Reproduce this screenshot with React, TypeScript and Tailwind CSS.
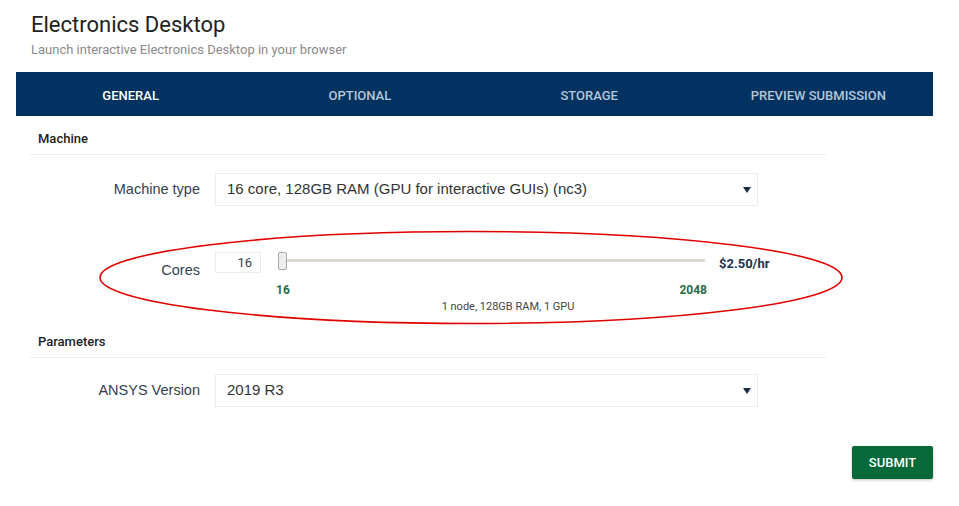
import React from "react";

const tabs = ["GENERAL", "OPTIONAL", "STORAGE", "PREVIEW SUBMISSION"];
const arial = { fontFamily: "'Liberation Sans', Arial, sans-serif" };

function Arrow() {
  return (
    <svg width="8" height="6" viewBox="0 0 8 6" className="text-[#1b2a40]">
      <path d="M0 0h8L4 6z" fill="currentColor" />
    </svg>
  );
}

function SelectBox({ value }: { value: string }) {
  return (
    <div
      className="flex h-[33px] w-[543px] items-center justify-between border border-[#ebebeb] bg-white pl-[11px] pr-[6px] text-[15px] text-[#333]"
      style={arial}
    >
      <span>{value}</span>
      <Arrow />
    </div>
  );
}

function SectionHead({ title }: { title: string }) {
  return (
    <div className="border-b border-[#ececec] pb-[7px] pl-[8px] text-[13px] font-medium leading-[16px] text-[#222]">
      {title}
    </div>
  );
}

function Label({ text, className = "" }: { text: string; className?: string }) {
  return (
    <div className={"w-[170px] text-right text-[14.5px] text-[#2f3f56] " + className} style={arial}>
      {text}
    </div>
  );
}

export default function App() {
  return (
    <div
      className="relative h-[506px] w-[959px] overflow-hidden bg-white"
      style={{ fontFamily: "Roboto, 'Liberation Sans', sans-serif" }}
    >
      {/* header */}
      <div className="pl-[31px] pt-[11px]">
        <h1 className="text-[22px] leading-[28px] text-[#222]">Electronics Desktop</h1>
        <p className="mt-[3px] text-[13px] leading-[16px] text-[#8a8a8a]">
          Launch interactive Electronics Desktop in your browser
        </p>
      </div>

      {/* tabs */}
      <div className="ml-[16px] mt-[14px] grid h-[44px] w-[917px] grid-cols-4 bg-[#02325f]">
        {tabs.map((t, i) => (
          <div
            key={t}
            className={
              "flex items-center justify-center pt-[3px] text-[13px] font-medium " +
              (i === 0 ? "text-white" : "text-[#b7c6d8]")
            }
          >
            {t}
          </div>
        ))}
      </div>

      <div className="ml-[30px] w-[796px]">
        {/* Machine */}
        <div className="pt-[15px]">
          <SectionHead title="Machine" />
        </div>
        <div className="mt-[18px] flex items-center gap-[15px]">
          <Label text="Machine type" />
          <SelectBox value="16 core, 128GB RAM (GPU for interactive GUIs) (nc3)" />
        </div>

        {/* Cores */}
        <div className="mt-[46px] flex gap-[15px]">
          <Label text="Cores" className="pt-[8px]" />
          <div className="w-[586px]">
            <div className="flex items-start">
              <div className="flex h-[21px] w-[46px] items-center justify-end border border-[#ebebeb] pr-[8px] text-[13px] text-[#2f3f56]">
                16
              </div>
              <div className="ml-[17px] w-[427px]">
                <div className="relative h-[18px]">
                  <div className="absolute left-[4px] right-0 top-[7px] h-[3px] bg-[#ddd9d2]" />
                  <div className="absolute left-0 top-0 h-[18px] w-[9px] rounded-[2px] border border-[#a9a9a9] bg-[#ededed]" />
                </div>
                <div className="mt-[13px] flex justify-between text-[12px] font-bold leading-[14px] text-[#2e6b45]">
                  <span className="-ml-[2px]">16</span>
                  <span className="-mr-[2px]">2048</span>
                </div>
              </div>
              <div className="ml-[14px] pt-[2px] text-[13px] font-bold text-[#1f3450]">$2.50/hr</div>
            </div>
            <div className="mt-[3px] text-center text-[11px] leading-[14px] text-[#444]">
              1 node, 128GB RAM, 1 GPU
            </div>
          </div>
        </div>

        {/* Parameters */}
        <div className="mt-[20px]">
          <SectionHead title="Parameters" />
        </div>
        <div className="mt-[16px] flex items-center gap-[15px]">
          <Label text="ANSYS Version" />
          <SelectBox value="2019 R3" />
        </div>
      </div>

      <div className="mt-[39px] flex w-[933px] justify-end">
        <button className="h-[33px] w-[81px] rounded-[2px] bg-[#06693a] text-[13px] font-medium text-white shadow-[0_1px_3px_rgba(0,0,0,0.25)]">
          SUBMIT
        </button>
      </div>

      {/* annotation */}
      <svg
        className="pointer-events-none absolute left-0 top-0"
        width="959"
        height="506"
        viewBox="0 0 959 506"
      >
        <ellipse cx="471" cy="277.5" rx="371" ry="46" fill="none" stroke="#e00000" strokeWidth="1.6" />
      </svg>
    </div>
  );
}
